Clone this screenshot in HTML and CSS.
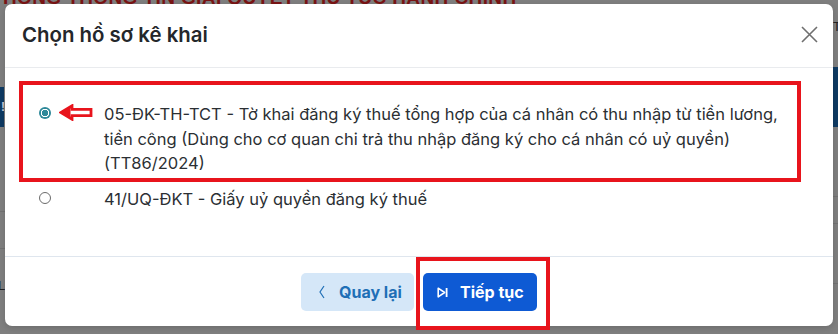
FILE: index.html
```html
<!DOCTYPE html>
<html lang="vi">
<head>
<meta charset="utf-8">
<title>Chọn hồ sơ kê khai</title>
<link rel="stylesheet" href="styles.css">
</head>
<body>
<div class="page">
  <div class="bg-title">HỆ THỐNG THÔNG TIN GIẢI QUYẾT THỦ TỤC HÀNH CHÍNH</div>
  <div class="bg-cols">
    <div class="bg-left">
      <div class="bg-chip bg-chip-l">!</div>
      <div class="bg-line l1"></div>
      <div class="bg-line l2"></div>
      <div class="bg-glyph">L</div>
    </div>
    <div class="bg-right">
      <div class="bg-t">T</div>
      <div class="bg-chip bg-chip-r"></div>
      <div class="bg-line r1"></div>
      <div class="bg-line r2"></div>
      <div class="bg-line r3"></div>
    </div>
  </div>
</div>

<div class="modal">
  <div class="modal-header">
    <h2 class="modal-title">Chọn hồ sơ kê khai</h2>
    <button class="close" aria-label="Đóng">
      <svg width="17" height="17" viewBox="0 0 17 17"><path d="M1 1 L16 16 M16 1 L1 16" stroke="#6f6f6f" stroke-width="1.6" fill="none"/></svg>
    </button>
  </div>
  <div class="modal-body">
    <div class="option">
      <span class="radio checked"></span>
      <span class="arrow">
        <svg width="34" height="17" viewBox="0 0 34 17"><path d="M2 8.5 L13 1.8 L13 5.3 L32 5.3 L32 11.7 L13 11.7 L13 15.2 Z" fill="#fff" stroke="#e8141c" stroke-width="2.8" stroke-linejoin="miter"/><path d="M3.5 8.5 L11.5 3.6 L11.5 13.4 Z" fill="#e8141c"/></svg>
      </span>
      <span class="label">05-ĐK-TH-TCT - Tờ khai đăng ký thuế tổng hợp của cá nhân có thu nhập từ tiền lương, tiền công (Dùng cho cơ quan chi trả thu nhập đăng ký cho cá nhân có uỷ quyền) (TT86/2024)</span>
    </div>
    <div class="option">
      <span class="radio"></span>
      <span class="label">41/UQ-ĐKT - Giấy uỷ quyền đăng ký thuế</span>
    </div>
    <div class="mark mark-option"></div>
  </div>
  <div class="modal-footer">
    <button class="btn btn-back">
      <svg width="8" height="14" viewBox="0 0 8 14"><path d="M6 1 L2 7 L6 13" stroke="#1f6fb6" stroke-width="1.2" fill="none"/></svg>
      <span>Quay lại</span>
    </button>
    <button class="btn btn-next">
      <svg width="11" height="11" viewBox="0 0 11 11"><path d="M1.2 1.2 L7.6 5.5 L1.2 9.8 Z" stroke="#fff" stroke-width="1.6" fill="none" stroke-linejoin="round"/><path d="M9.6 1 L9.6 10" stroke="#fff" stroke-width="1.8"/></svg>
      <span>Tiếp tục</span>
    </button>
  </div>
</div>
<div class="mark mark-btn"></div>
</body>
</html>
```

FILE: styles.css
```css
html, body {
  margin: 0;
  padding: 0;
}
body {
  width: 838px;
  height: 334px;
  overflow: hidden;
  position: relative;
  background: #7f7f7f;
  font-family: Inter, "Noto Sans", sans-serif;
}

/* background page (dimmed) */
.page {
  height: 334px;
}
.bg-title {
  color: #7a1414;
  font: bold 19px "Liberation Sans", sans-serif;
  white-space: nowrap;
  line-height: 20px;
  margin-top: -12px;
  text-indent: -42px;
  letter-spacing: 0.4px;
}
.bg-cols {
  display: flex;
  justify-content: space-between;
}
.bg-left, .bg-right {
  display: flex;
  flex-direction: column;
}
.bg-left { width: 6px; }
.bg-right { width: 5px; }
.bg-chip {
  background: #0e3a63;
}
.bg-chip-l {
  margin-top: 79px;
  height: 40px;
  width: 4px;
  color: #ccd;
  font: bold 12px "Liberation Sans", sans-serif;
  line-height: 40px;
  overflow: hidden;
  text-indent: 1px;
}
.bg-line {
  height: 1px;
  background: #727272;
}
.l1 { margin-top: 84px; }
.l2 { margin-top: 36px; }
.bg-glyph {
  margin-top: 30px;
  color: #222;
  font: 13px "Liberation Sans", sans-serif;
  line-height: 14px;
  margin-left: -2px;
}
.bg-t {
  margin-top: 13px;
  height: 12px;
  color: #222;
  font: 13px "Liberation Sans", sans-serif;
  line-height: 12px;
}
.bg-chip-r {
  margin-top: 34px;
  height: 60px;
}
.r1 { margin-top: 69px; }
.r2 { margin-top: 26px; }
.r3 { margin-top: 59px; }

/* modal */
.modal {
  position: absolute;
  left: 5px;
  top: 4px;
  width: 828px;
  height: 322px;
  background: #fff;
  border-radius: 7px;
  display: flex;
  flex-direction: column;
  box-shadow: 0 2px 6px rgba(0, 0, 0, 0.15);
}
.modal-header {
  height: 64px;
  box-sizing: border-box;
  border-bottom: 1px solid #e9ebee;
  display: flex;
  align-items: center;
  justify-content: space-between;
  padding: 0 15px 2px 17px;
}
.modal-title {
  margin: 0;
  font-size: 20.4px;
  font-weight: 600;
  color: #24272b;
}
.close {
  border: 0;
  background: none;
  padding: 0;
  width: 17px;
  height: 17px;
  display: flex;
}

.modal-body {
  flex: 1;
  position: relative;
  padding: 34px 0 0 34px;
}
.option {
  display: flex;
  align-items: flex-start;
  position: relative;
}
.option + .option {
  margin-top: 11px;
}
.radio {
  width: 12px;
  height: 12px;
  box-sizing: border-box;
  border-radius: 50%;
  flex: none;
  margin-top: 5px;
  margin-right: 53px;
  border: 1px solid #6b6b6b;
  background: #fff;
}
.radio.checked {
  border: 0;
  background: radial-gradient(circle, #2d8899 0 2.9px, #ffffff 3.4px 4.0px, #2d8899 4.5px);
}
.arrow {
  position: absolute;
  left: 20px;
  top: 2px;
  width: 34px;
  height: 17px;
  display: block;
}
.label {
  font-size: 16.5px;
  line-height: 24.5px;
  color: #2b2f33;
  width: 686px;
}

.mark {
  position: absolute;
  border: 4px solid #e8141c;
  box-sizing: border-box;
}
.mark-option {
  left: 14px;
  top: 13px;
  width: 782px;
  height: 101px;
}
.mark-btn {
  left: 416px;
  top: 257px;
  width: 134px;
  height: 73px;
}

.modal-footer {
  height: 70px;
  box-sizing: border-box;
  border-top: 1px solid #dfe6ee;
  display: flex;
  justify-content: center;
  align-items: flex-start;
  padding-top: 16px;
  gap: 9px;
}
.btn {
  height: 38px;
  border: 0;
  border-radius: 5px;
  display: flex;
  align-items: center;
  font-family: Inter, "Noto Sans", sans-serif;
  font-size: 16px;
  font-weight: 700;
  padding: 0;
}
.btn-back {
  width: 113px;
  background: #d5e7f8;
  color: #1f6fb6;
  padding-left: 17px;
  gap: 13px;
}
.btn-next {
  width: 114px;
  background: #0e5ad4;
  color: #fff;
  padding-left: 14px;
  gap: 12px;
}
```
